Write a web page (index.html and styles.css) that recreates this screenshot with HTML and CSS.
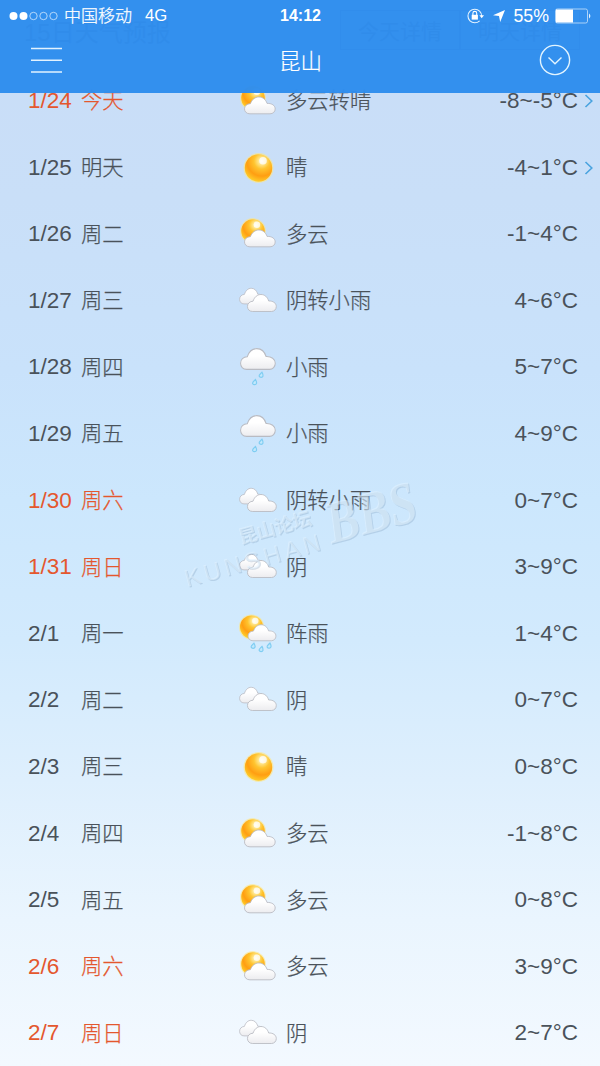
FILE: index.html
```html
<!DOCTYPE html>
<html lang="zh-CN">
<head>
<meta charset="utf-8">
<title>昆山</title>
<link rel="stylesheet" href="styles.css">
</head>
<body>
<svg class="sprite" aria-hidden="true">
  <defs>
    <radialGradient id="sunFill" cx=".62" cy=".25" r=".8">
      <stop offset="0" stop-color="#fffbe0"/><stop offset=".16" stop-color="#ffe58a"/><stop offset=".36" stop-color="#ffc42e"/><stop offset=".68" stop-color="#ff9e12"/><stop offset="1" stop-color="#ffd32c"/>
    </radialGradient>
    <linearGradient id="cloudFill" x1="0" y1="0" x2="0" y2="1">
      <stop offset=".35" stop-color="#fff"/><stop offset="1" stop-color="#ececef"/>
    </linearGradient>
    <g id="ball">
      <circle r="15" fill="#ffe680" opacity=".6"/>
      <circle r="13.7" fill="url(#sunFill)"/>
      <circle cx="4.5" cy="-7.3" r="3.8" fill="#fff" opacity=".75"/>
    </g>
    <path id="cloud" d="M6 17.5C2.5 17.5.5 15.2.5 12.5C.5 9.5 3 7.3 6.5 7.2C8 3 11.2.5 15 .5C19 .5 22 3 23.3 7C28 6.8 31.5 9 31.5 12.6C31.5 15.3 29.3 17.5 26.3 17.5Z" fill="url(#cloudFill)" stroke="#b9bbc2" stroke-width=".9"/>
    <path id="drop" d="M1 -2.8C2.1 -.9 2.3 0 2 1.1C1.5 2.8 -1.2 2.8 -1.9 1.1C-2.2 -.2 -.6 -1.2 1 -2.8Z" fill="#c2e8fc" stroke="#7fcdf2" stroke-width="1.2"/>
    <symbol id="sun" viewBox="0 0 40 40"><use href="#ball" x="20.5" y="20"/></symbol>
    <symbol id="partly" viewBox="0 0 40 40">
      <use href="#ball" transform="translate(15 17) scale(.86)"/>
      <use href="#cloud" transform="translate(6 15.5) scale(.99)"/>
    </symbol>
    <symbol id="overcast" viewBox="0 0 40 40">
      <use href="#cloud" transform="translate(1.2 6.8) scale(.8 .92)"/>
      <use href="#cloud" transform="translate(9 13) scale(.93 1)"/>
    </symbol>
    <symbol id="rain" viewBox="0 0 40 40">
      <use href="#cloud" transform="translate(2 1) scale(1.12 1.22)"/>
      <use href="#drop" x="23" y="28"/><use href="#drop" x="16.5" y="35.3"/>
    </symbol>
    <symbol id="shower" viewBox="0 0 40 40">
      <use href="#ball" transform="translate(13.5 13) scale(.84)"/>
      <use href="#cloud" transform="translate(9.6 10.3) scale(.9 .94)"/>
      <use href="#drop" x="15" y="32"/><use href="#drop" x="23" y="35.2"/><use href="#drop" x="31" y="31.8"/>
    </symbol>
    <symbol id="chevron" viewBox="0 0 10 14"><path d="M1.5 1L7.8 7L1.5 13" fill="none" stroke="#4aa3df" stroke-width="1.6"/></symbol>
  </defs>
</svg>
<main class="screen">
  <header class="header">
    <div class="status">
      <div class="status-left">
        <svg class="signal" width="50" height="10" viewBox="0 0 50 10"><g fill="#fff"><circle cx="4.5" cy="5" r="4"/><circle cx="14.5" cy="5" r="4"/></g><g fill="none" stroke="#d3e8fd" stroke-width=".8"><circle cx="24.5" cy="5" r="3.7"/><circle cx="34.5" cy="5" r="3.7"/><circle cx="44.5" cy="5" r="3.7"/></g></svg>
        <span class="carrier">中国移动</span><span class="network">4G</span>
      </div>
      <div class="clock">14:12</div>
      <div class="status-right">
        <svg class="lock" width="17" height="16" viewBox="0 0 17 16"><path d="M12.6 3.2A6.8 6.8 0 1 0 12.6 12.8M12.6 3.2A6.8 6.8 0 0 1 14.6 8" fill="none" stroke="#e5f3ff" stroke-width="1.1"/><path d="M12.4 7.3H17L14.7 10.2Z" fill="#fff"/><rect x="4.7" y="6.8" width="6.2" height="4.8" fill="#fff"/><path d="M5.9 7V5.3A1.9 1.9 0 0 1 9.7 5.3V7" fill="none" stroke="#fff" stroke-width="1.1"/></svg>
        <svg class="arrow" width="12" height="12" viewBox="0 0 12 12"><path d="M12 0L7.2 12L6 6.1L0 5.3Z" fill="#fff"/></svg>
        <span class="percent">55%</span>
        <svg class="battery" width="37" height="16" viewBox="0 0 37 16"><rect x=".5" y="1" width="32" height="14" rx="1.8" fill="none" stroke="#acd2f8"/><path d="M1 1.5H18V14.5H1Z" fill="#fff"/><path d="M34 5.5Q36.8 8 34 10.5Z" fill="#e5f3ff"/></svg>
      </div>
    </div>
    <nav class="nav">
      <svg width="31" height="27" viewBox="0 0 31 27"><path d="M0 1.5H31M0 13.3H31M0 25H31" stroke="#e2f2ff" stroke-width="1.5"/></svg>
      <h1 class="city">昆山</h1>
      <svg width="32" height="32" viewBox="0 0 32 32"><g fill="none" stroke="#e2f4ff" stroke-width="1.4"><circle cx="16" cy="16" r="14.6"/><path d="M9.5 13.5L16 19.7L22.5 13.5"/></g></svg>
    </nav>
  </header>

  <section class="forecast">
    <div class="heading"><span class="heading-title">15日天气预报</span><span class="heading-tab">今天详情</span><span class="heading-tab">明天详情</span></div>
    <div class="row weekend"><span class="date">1/24</span><span class="day">今天</span><svg class="icon"><use href="#partly"/></svg><span class="weather">多云转晴</span><span class="temp">-8~-5°C</span><svg class="more"><use href="#chevron"/></svg></div>
    <div class="row"><span class="date">1/25</span><span class="day">明天</span><svg class="icon"><use href="#sun"/></svg><span class="weather">晴</span><span class="temp">-4~1°C</span><svg class="more"><use href="#chevron"/></svg></div>
    <div class="row"><span class="date">1/26</span><span class="day">周二</span><svg class="icon"><use href="#partly"/></svg><span class="weather">多云</span><span class="temp">-1~4°C</span></div>
    <div class="row"><span class="date">1/27</span><span class="day">周三</span><svg class="icon"><use href="#overcast"/></svg><span class="weather">阴转小雨</span><span class="temp">4~6°C</span></div>
    <div class="row"><span class="date">1/28</span><span class="day">周四</span><svg class="icon"><use href="#rain"/></svg><span class="weather">小雨</span><span class="temp">5~7°C</span></div>
    <div class="row"><span class="date">1/29</span><span class="day">周五</span><svg class="icon"><use href="#rain"/></svg><span class="weather">小雨</span><span class="temp">4~9°C</span></div>
    <div class="row weekend"><span class="date">1/30</span><span class="day">周六</span><svg class="icon"><use href="#overcast"/></svg><span class="weather">阴转小雨</span><span class="temp">0~7°C</span></div>
    <div class="row weekend"><span class="date">1/31</span><span class="day">周日</span><svg class="icon"><use href="#overcast"/></svg><span class="weather">阴</span><span class="temp">3~9°C</span></div>
    <div class="row"><span class="date">2/1</span><span class="day">周一</span><svg class="icon"><use href="#shower"/></svg><span class="weather">阵雨</span><span class="temp">1~4°C</span></div>
    <div class="row"><span class="date">2/2</span><span class="day">周二</span><svg class="icon"><use href="#overcast"/></svg><span class="weather">阴</span><span class="temp">0~7°C</span></div>
    <div class="row"><span class="date">2/3</span><span class="day">周三</span><svg class="icon"><use href="#sun"/></svg><span class="weather">晴</span><span class="temp">0~8°C</span></div>
    <div class="row"><span class="date">2/4</span><span class="day">周四</span><svg class="icon"><use href="#partly"/></svg><span class="weather">多云</span><span class="temp">-1~8°C</span></div>
    <div class="row"><span class="date">2/5</span><span class="day">周五</span><svg class="icon"><use href="#partly"/></svg><span class="weather">多云</span><span class="temp">0~8°C</span></div>
    <div class="row weekend"><span class="date">2/6</span><span class="day">周六</span><svg class="icon"><use href="#partly"/></svg><span class="weather">多云</span><span class="temp">3~9°C</span></div>
    <div class="row weekend"><span class="date">2/7</span><span class="day">周日</span><svg class="icon"><use href="#overcast"/></svg><span class="weather">阴</span><span class="temp">2~7°C</span></div>
  </section>

  <svg class="watermark" width="270" height="140" viewBox="0 0 270 140" aria-hidden="true">
    <g transform="translate(17 127) rotate(-15.5)">
      <text class="mark-name" x="0" y="0" textLength="140">KUNSHAN</text>
      <text class="mark-cn" x="63" y="-27" textLength="75">昆山论坛</text>
      <text class="mark-bbs" x="151" y="-3" textLength="92" lengthAdjust="spacingAndGlyphs">BBS</text>
    </g>
  </svg>
</main>
</body>
</html>
```
FILE: styles.css
```css
* { box-sizing: border-box; }
body {
  margin: 0;
  font-family: "Liberation Sans", "Noto Sans CJK SC", sans-serif;
  color: #4a525a;
}
.sprite { position: absolute; width: 0; height: 0; }
.screen {
  position: relative;
  width: 600px;
  height: 1066px;
  overflow: hidden;
  background: linear-gradient(#c9ddf7 0, #c9dff8 200px, #c9e2fb 370px, #cce7fd 500px, #d2eafd 640px, #deeffd 780px, #eaf5fe 920px, #f3f9ff 1066px);
}

/* Translucent bar above the scrolled list */
.header {
  position: absolute;
  inset: 0 0 auto;
  z-index: 2;
  height: 93px;
  background: rgba(47, 141, 238, .975);
  color: #fff;
}
.status {
  display: grid;
  grid-template-columns: 1fr auto 1fr;
  align-items: center;
  height: 31px;
  padding: 0 8px 0 9px;
  font-size: 17px;
  line-height: 30px;
}
.status-left, .status-right { display: flex; align-items: center; }
.status-right { justify-content: flex-end; }
.carrier {
  position: relative;
  top: -1px;
  margin-left: 5px;
  font-family: "Noto Sans CJK SC", sans-serif;
  font-weight: 300;
  font-size: 17px;
  -webkit-text-stroke: .25px currentColor;
}
.network { margin-left: 13px; font-size: 16.7px; }
.clock { font-weight: 700; font-size: 16px; }
.arrow { margin: 0 8px 0 9px; }
.percent { font-size: 17.8px; margin-right: 6px; }
.nav {
  display: flex;
  align-items: center;
  justify-content: space-between;
  height: 58px;
  padding: 0 29px 0 31px;
}
.city {
  margin: 0 0 1px;
  font: 300 21.5px/30px "Noto Sans CJK SC", sans-serif;
  -webkit-text-stroke: .2px currentColor;
}

.heading {
  display: flex;
  align-items: center;
  height: 67.7px;
  padding: 0 20px 7px 24px;
  font-size: 24px;
}
.heading-title { flex: 1; }
.heading-tab {
  width: 120px;
  padding: 4px 0;
  border: 1px solid #6f8299;
  font-size: 21px;
  text-align: center;
}
.row {
  display: grid;
  grid-template-columns: 53px 157px 40px 1fr auto 22px;
  align-items: center;
  height: 66.6px;
  padding-left: 28px;
  font-size: 22.5px;
  line-height: 30px;
}
.day, .weather {
  padding-bottom: 3px;
  font-family: "Noto Sans CJK SC", sans-serif;
  font-weight: 300;
  font-size: 21.3px;
  -webkit-text-stroke: .25px currentColor;
}
.weather { padding-left: 8px; }
.weekend .date, .weekend .day { color: #e4572e; }
.icon { width: 40px; height: 40px; }
.more { width: 10px; height: 14px; margin-left: 6px; }

.watermark {
  position: absolute;
  left: 170px;
  top: 460px;
  fill: rgba(226, 242, 255, .55);
  filter: drop-shadow(1px 1px .5px rgba(90, 125, 160, .4));
}
.mark-name { font: 24px "Liberation Sans", sans-serif; }
.mark-cn { font: 700 19px "Noto Sans CJK SC", sans-serif; }
.mark-bbs { font: italic 700 60px "Liberation Serif", serif; }
```
